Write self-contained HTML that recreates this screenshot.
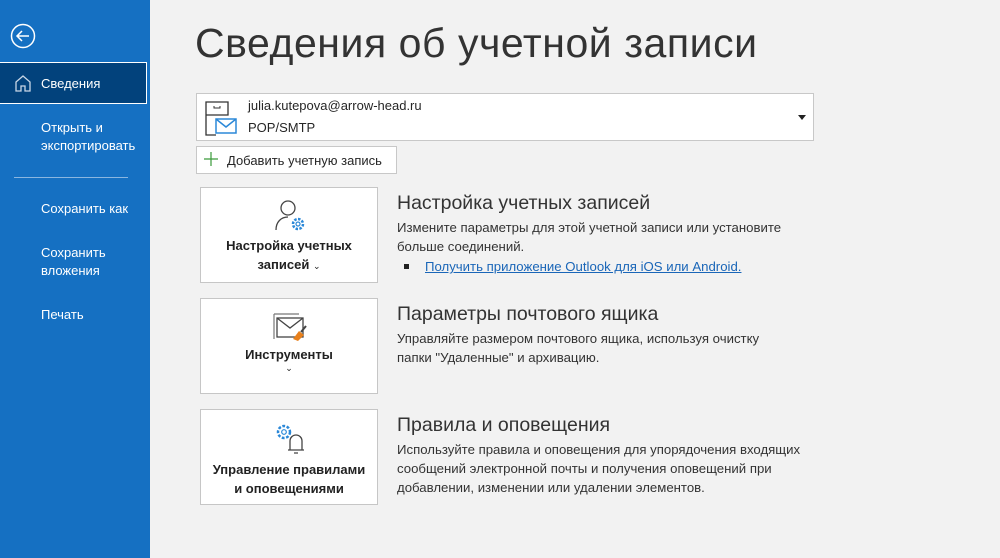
<!DOCTYPE html>
<html><head><meta charset="utf-8"><style>
body{margin:0;width:1000px;height:558px;background:#f2f2f2;font-family:"Liberation Sans",sans-serif;position:relative;overflow:hidden;color:#262626}
.side{position:absolute;left:0;top:0;width:150px;height:558px;background:#1570c2;color:#fff;font-size:13px}
.sel{position:absolute;left:0;top:62px;width:146px;height:40px;background:#02427c;border:1px solid #fff;border-left:none}
.it{position:absolute;left:41px;line-height:18px}
.a{position:absolute}
h1{position:absolute;left:195px;top:20px;margin:0;font-weight:normal;font-size:41px;color:#333;letter-spacing:0.55px}
.box{position:absolute;background:#fff;border:1px solid #c8c8c8}
.card{position:absolute;left:200px;width:176px;height:94px;background:#fff;border:1px solid #c6c6c6;text-align:center;font-weight:bold;font-size:13px;color:#222}
.h{position:absolute;left:397px;font-size:19.5px;color:#333}
.p{position:absolute;left:397px;font-size:13.2px;line-height:19px;color:#333}
</style></head><body>
<div class="side">
<svg class="a" style="left:10px;top:23px" width="26" height="26" viewBox="0 0 26 26"><circle cx="13" cy="13" r="11.5" fill="none" stroke="#fff" stroke-width="1.5"/><path d="M19 13H7M12 8l-5 5 5 5" fill="none" stroke="#fff" stroke-width="1.5"/></svg>
<div class="sel"></div>
<svg class="a" style="left:14px;top:74px" width="18" height="18" viewBox="0 0 18 18"><path d="M2 8L9 2l7 6v9h-5v-5H7v5H2z" fill="none" stroke="#c8d6e6" stroke-width="1.3"/></svg>
<div class="it" style="top:75px">Сведения</div>
<div class="it" style="top:119px">Открыть и<br>экспортировать</div>
<div class="a" style="left:14px;top:177px;width:114px;height:1px;background:#8ab6e0"></div>
<div class="it" style="top:200px">Сохранить как</div>
<div class="it" style="top:244px">Сохранить<br>вложения</div>
<div class="it" style="top:306px">Печать</div>
</div>
<h1>Сведения об учетной записи</h1>
<div class="box" style="left:196px;top:93px;width:616px;height:46px">
<svg class="a" style="left:6px;top:6px" width="36" height="36" viewBox="0 0 36 36"><path d="M3 2h22v13H3zM3 15v20h10" fill="none" stroke="#333" stroke-width="1.3"/><path d="M11 6v2h6V6" fill="none" stroke="#333"/><rect x="13" y="19" width="20" height="14" fill="#fff" stroke="#2b88d8" stroke-width="1.5"/><path d="M13 19l10 8 10-8" fill="none" stroke="#2b88d8" stroke-width="1.5"/></svg>
<div class="a" style="left:51px;top:4px;font-size:13px">julia.kutepova@arrow-head.ru</div>
<div class="a" style="left:51px;top:26px;font-size:13px">POP/SMTP</div>
<div class="a" style="left:601px;top:21px;width:0;height:0;border:4px solid transparent;border-top:5px solid #222"></div>
</div>
<div class="box" style="left:196px;top:146px;width:199px;height:26px;font-size:13px">
<svg class="a" style="left:6px;top:4px" width="16" height="16"><path d="M8 1v14M1 8h14" stroke="#3a9a3a" stroke-width="1.2"/></svg>
<div class="a" style="left:30px;top:6px">Добавить учетную запись</div></div>
<div class="card" style="top:187px">
<svg class="a" style="left:73px;top:11px" width="34" height="36" viewBox="0 0 34 36"><circle cx="14" cy="9" r="7" fill="none" stroke="#444" stroke-width="1.3"/><path d="M2 31c0-8 5-13 12-13" fill="none" stroke="#444" stroke-width="1.3"/><circle cx="24" cy="25" r="5" fill="none" stroke="#2b88d8" stroke-width="2.5" stroke-dasharray="2.5 1.4"/><circle cx="24" cy="25" r="2" fill="none" stroke="#2b88d8" stroke-width="1.2"/></svg>
<div class="a" style="left:0;width:176px;top:48px;line-height:19px">Настройка учетных<br>записей <span style="font-weight:normal;font-size:9px">⌄</span></div></div>
<div class="card" style="top:298px">
<svg class="a" style="left:72px;top:14px" width="36" height="32" viewBox="0 0 36 32"><path d="M1 1h25M1 1v25" stroke="#777" stroke-width="1.2" fill="none"/><rect x="4" y="5" width="26" height="19" fill="#fff" stroke="#444" stroke-width="1.3"/><path d="M4 5l13 10 13-10" fill="none" stroke="#444" stroke-width="1.3"/><path d="M20 26l6-8 5 4-6 6z" fill="#e8801c"/><path d="M28 19l5-6" stroke="#444" stroke-width="2"/></svg>
<div class="a" style="left:0;width:176px;top:48px">Инструменты</div>
<div class="a" style="left:0;width:176px;top:64px;font-weight:normal;font-size:9px">⌄</div></div>
<div class="card" style="top:409px">
<svg class="a" style="left:73px;top:12px" width="34" height="34" viewBox="0 0 34 34"><circle cx="10" cy="10" r="6" fill="none" stroke="#2b88d8" stroke-width="2.5" stroke-dasharray="2.8 1.6"/><circle cx="10" cy="10" r="2.3" fill="none" stroke="#2b88d8" stroke-width="1.2"/><path d="M14 28h16M16 28v-9a6 6 0 0 1 12 0v9M20 31h4" fill="none" stroke="#444" stroke-width="1.3"/></svg>
<div class="a" style="left:0;width:176px;top:50px;line-height:19px">Управление правилами<br>и оповещениями</div></div>
<div class="h" style="top:192px">Настройка учетных записей</div>
<div class="p" style="top:218px">Измените параметры для этой учетной записи или установите<br>больше соединений.</div>
<div class="a" style="left:404px;top:264px;width:5px;height:5px;background:#222"></div>
<div class="p" style="left:425px;top:257px;color:#1a66b8;text-decoration:underline">Получить приложение Outlook для iOS или Android.</div>
<div class="h" style="top:303px">Параметры почтового ящика</div>
<div class="p" style="top:329px">Управляйте размером почтового ящика, используя очистку<br>папки "Удаленные" и архивацию.</div>
<div class="h" style="top:414px">Правила и оповещения</div>
<div class="p" style="top:440px">Используйте правила и оповещения для упорядочения входящих<br>сообщений электронной почты и получения оповещений при<br>добавлении, изменении или удалении элементов.</div>
</body></html>
